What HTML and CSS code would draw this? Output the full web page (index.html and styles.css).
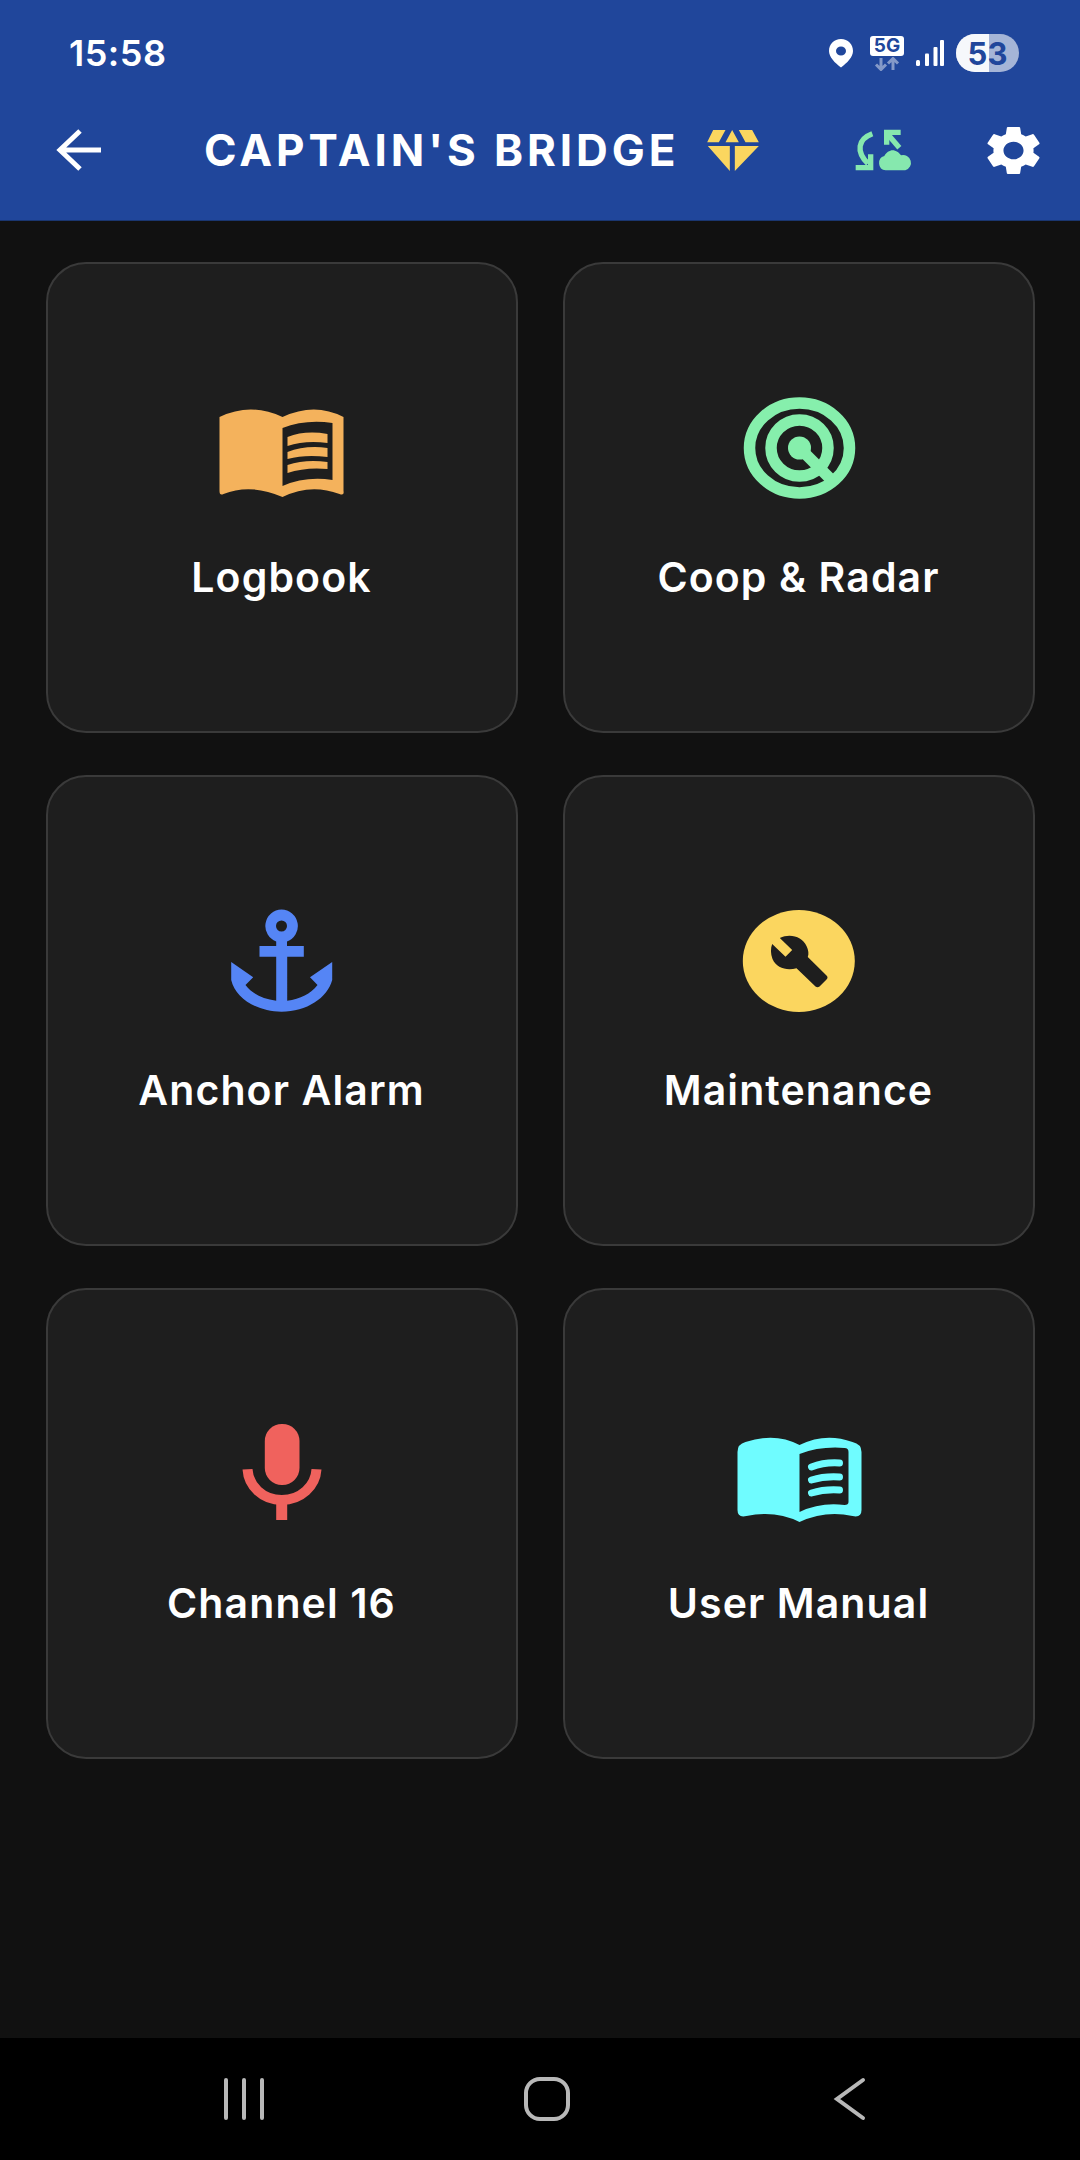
FILE: index.html
```html
<!DOCTYPE html>
<html lang="en">
<head>
    <meta charset="UTF-8">
    <meta name="viewport" content="width=device-width, initial-scale=1.0">
    <title>Captain's Bridge</title>
    <link rel="stylesheet" href="styles.css">
</head>
<body>
    <header class="top">
        <div class="status-bar">
            <span class="time">15:58</span>
            <div class="status-icons">
                <svg class="pin" viewBox="0 0 26 30"><path fill-rule="evenodd" fill="#fff" d="M13 1C6 1 1 6 1 13c0 6 6 12 12 16.500C19 25 25 19 25 13 25 6 20 1 13 1zm0 7.500a5 4.500 0 1 1 0 9 5 4.500 0 0 1 0-9z"/></svg>
                <div class="net">
                    <span class="net-label">5G</span>
                    <svg class="net-arrows" viewBox="0 0 34 14"><path d="M11 1v11M6 7.500l5 5 5-5" /><path class="up" d="M23 13V2M18 6.500l5-5 5 5" /></svg>
                </div>
                <svg class="signal" viewBox="0 0 28 26"><rect x="0" y="20" width="4" height="6" rx="1.500"/><rect x="9" y="13.500" width="4" height="12.500" rx="1"/><rect x="17.500" y="7" width="4" height="19" rx="1"/><rect x="24" y="0" width="4" height="26" rx="1"/></svg>
                <div class="battery"><span class="battery-level"></span><span class="battery-num">53</span></div>
            </div>
        </div>
        <div class="app-bar">
            <svg class="back" viewBox="0 0 50 44"><path d="M47 22H6M26 3L6 22l20 19"/></svg>
            <h1 class="title">CAPTAIN'S BRIDGE</h1>
            <svg class="gem" viewBox="50 52 155 126"><path fill="#fbd65f" d="M68 55h37L85 92H50zM125 55l20 37h-40zM145 55h40l20 37h-40zM52 103h66v75zM133 103h72l-72 75z"/></svg>
            <svg class="sync" viewBox="220 325 180 132"><g fill="none" stroke="#86e8ae" stroke-width="16"><path d="M275 342C232 358 225 395 262 432"/><path d="M225 444h45v-40"/><path d="M318 375v-37h42"/><path d="M320 342l36 42"/></g><path fill="#86e8ae" d="M315 452a22 22 0 0 1-4-43c6-12 20-20 32-16 8 2 14 8 18 14a23 23 0 0 1 13 45z"/></svg>
            <svg class="gear" viewBox="2.500 2 19 20" preserveAspectRatio="none"><path fill="#fff" d="M19.140 12.940c.04-.3.06-.61.06-.94 0-.32-.02-.64-.07-.94l2.030-1.580c.18-.14.23-.41.12-.61l-1.920-3.320c-.12-.22-.37-.29-.59-.22l-2.390.96c-.5-.38-1.030-.7-1.620-.94l-.36-2.540c-.04-.24-.24-.41-.48-.41h-3.840c-.24 0-.43.17-.47.41l-.36 2.540c-.59.24-1.130.57-1.620.94l-2.390-.96c-.22-.08-.47 0-.59.22L2.740 8.870c-.12.21-.08.47.12.61l2.030 1.580c-.05.3-.09.63-.09.94s.02.64.07.94l-2.030 1.580c-.18.14-.23.41-.12.61l1.920 3.320c.12.22.37.29.59.22l2.390-.96c.5.38 1.030.7 1.620.94l.36 2.540c.05.24.24.41.48.41h3.840c.24 0 .44-.17.47-.41l.36-2.540c.59-.24 1.130-.56 1.620-.94l2.390.96c.22.08.47 0 .59-.22l1.920-3.320c.12-.22.07-.47-.12-.61l-2.010-1.580zM12 15.600c-1.980 0-3.600-1.620-3.600-3.600s1.620-3.600 3.600-3.600 3.600 1.620 3.600 3.600-1.620 3.600-3.600 3.600z"/></svg>
        </div>
    </header>

    <main class="grid">
        <div class="card">
            <svg class="icon" viewBox="21.500 12 140 112">
                <path fill="#f4b25c" fill-rule="evenodd" d="M29 37Q60 22 92 37Q124 22 153 37V111Q154 116 149 114Q120 103 92 117Q60 103 33 114Q29 116 29 111zM92 48V106Q115 96 142 100V43Q115 39 92 48z"/>
                <path fill="#f4b25c" d="M97 57Q115 50 137 54V63Q115 60 97 66zM97 72Q115 65 137 68V77Q115 74 97 79zM97 85Q115 79 137 82V89Q115 87 97 93z"/>
            </svg>
            <span class="label">Logbook</span>
        </div>
        <div class="card">
            <svg class="icon" viewBox="8.500 12 140 112">
                <g fill="none" stroke="#86efac" stroke-width="11.500">
                    <ellipse cx="79" cy="68" rx="50" ry="45"/>
                    <ellipse cx="79" cy="68" rx="28.500" ry="28"/>
                    <path d="M79 68l30 30"/>
                </g>
                <circle cx="79" cy="68" r="11.500" fill="#86efac"/>
            </svg>
            <span class="label">Coop &amp; Radar</span>
        </div>
        <div class="card">
            <svg class="icon" viewBox="1.500 15 140 112">
                <path fill="#5585f5" fill-rule="evenodd" d="M71 19.500a16.500 16.500 0 0 1 5.500 32V56H93.300V66.700H76.700V110.700C90 109 100 104 107 95L99.500 87.300 121.700 72V90C117 108 96 121.700 71 121.700S25 108 20.700 90V72L42.700 87.300 35 95C42 104 52 109 65.700 110.700V66.700H49V56H65.700V51.500A16.500 16.500 0 0 1 71 19.500zM71 30.500a5.500 5.500 0 1 0 0 11 5.500 5.500 0 0 0 0-11z"/>
            </svg>
            <span class="label">Anchor Alarm</span>
        </div>
        <div class="card">
            <svg class="icon" viewBox="-1.500 5 140 112">
                <ellipse cx="68.300" cy="61" rx="56" ry="51" fill="#fbd65f"/>
                <path fill="#1e1e1e" d="M49.300 38C60 33 72 37 76 46 78 50 78.500 54 77.300 57L96 75.500Q98 77.500 96 79.500L89 86.500Q87 88 85 86.500L66 68.300C56 71 46 68 42 59 40 54 40 48 41.700 44L55 56.700 61.700 50z"/>
            </svg>
            <span class="label">Maintenance</span>
        </div>
        <div class="card">
            <svg class="icon" viewBox="-8.500 8 140 112">
                <rect x="44.300" y="14" width="34.700" height="61" rx="17" fill="#f0625d"/>
                <path fill="none" stroke="#f0625d" stroke-width="10" d="M27 59.300C28 76 42 90 61.300 90S95 76 96 59.300"/>
                <rect x="55.700" y="88" width="11" height="22" fill="#f0625d"/>
            </svg>
            <span class="label">Channel 16</span>
        </div>
        <div class="card">
            <svg class="icon" viewBox="8.500 8 140 112">
                <path fill="#6ffcff" fill-rule="evenodd" d="M17 42Q17 34 25 32Q55 22 79 35Q105 22 132 32Q141 34 141 42V100Q141 108 132 106Q105 100 79 112Q55 100 26 106Q17 108 17 100zM79 44V102Q100 92 124 95Q128 95 128 92V42Q128 38 124 38Q100 36 79 44z"/>
                <g fill="none" stroke="#6ffcff" stroke-width="7" stroke-linecap="round">
                    <path d="M91 57Q104 52 119 53"/>
                    <path d="M91 70Q104 66 119 67"/>
                    <path d="M91 83Q104 79 119 80"/>
                </g>
            </svg>
            <span class="label">User Manual</span>
        </div>
    </main>

    <nav class="nav-bar">
        <svg class="nav-icon" viewBox="0 0 60 44"><path d="M12 3v38M30 3v38M48 3v38"/></svg>
        <svg class="nav-icon" viewBox="0 0 60 44"><rect x="9" y="2" width="42" height="40" rx="14"/></svg>
        <svg class="nav-icon" viewBox="0 0 60 44"><path d="M43 3L17 22l26 19"/></svg>
    </nav>
</body>
</html>
```

FILE: styles.css
```css
* {
    box-sizing: border-box;
}
body {
    margin: 0;
    height: 2160px;
    display: flex;
    flex-direction: column;
    background-color: #111111;
    color: white;
    font-family: Inter, "Liberation Sans", sans-serif;
}
.top {
    height: 221px;
    background-color: #20469b;
    border-bottom: 1px solid #1a3670;
}
.status-bar {
    height: 106px;
    display: flex;
    align-items: center;
    justify-content: space-between;
    padding: 0 61px 0 69px;
}
.time {
    font-size: 36px;
    font-weight: 600;
    letter-spacing: 0.5px;
}
.status-icons {
    display: flex;
    align-items: center;
}
.pin {
    width: 26px;
    height: 30px;
    margin-right: 16px;
}
.net {
    width: 34px;
    margin-right: 12px;
    display: flex;
    flex-direction: column;
    align-items: center;
}
.net-label {
    width: 34px;
    height: 20px;
    background-color: white;
    border-radius: 3px;
    color: #20469b;
    font-size: 19px;
    line-height: 20px;
    font-weight: 700;
    text-align: center;
}
.net-arrows {
    width: 34px;
    height: 14px;
    margin-top: 1px;
    fill: none;
    stroke: rgba(255, 255, 255, 0.45);
    stroke-width: 3;
}
.signal {
    width: 28px;
    height: 26px;
    margin-right: 12px;
    fill: white;
}
.battery {
    position: relative;
    width: 63px;
    height: 38px;
    border-radius: 19px;
    overflow: hidden;
    background-color: rgba(255, 255, 255, 0.6);
    display: flex;
    align-items: center;
    justify-content: center;
}
.battery-level {
    position: absolute;
    left: 0;
    top: 0;
    bottom: 0;
    width: 33px;
    background-color: rgba(255, 255, 255, 0.9);
}
.battery-num {
    position: relative;
    color: #20469b;
    font-size: 31px;
    font-weight: 700;
}
.app-bar {
    height: 88px;
    display: flex;
    align-items: center;
}
.back {
    width: 50px;
    height: 44px;
    margin-left: 54px;
    margin-right: 100px;
    fill: none;
    stroke: white;
    stroke-width: 5;
}
.title {
    margin: 0 28px 0 0;
    font-size: 44px;
    font-weight: 700;
    letter-spacing: 3.9px;
    white-space: nowrap;
}
.gem {
    width: 52px;
    height: 42px;
    margin-right: 95px;
}
.sync {
    width: 60px;
    height: 44px;
    margin-right: 73px;
}
.gear {
    width: 53px;
    height: 49px;
}
.grid {
    flex: 1;
    display: grid;
    grid-template-columns: 472px 472px;
    grid-auto-rows: 471px;
    gap: 42px 45px;
    padding: 41px 45px 0 45.5px;
}
.card {
    background-color: #1e1e1e;
    border: 2px solid #3a3a3a;
    border-radius: 40px;
    display: flex;
    flex-direction: column;
    align-items: center;
    justify-content: center;
    gap: 50px;
    padding-bottom: 3px;
}
.icon {
    width: 140px;
    height: 112px;
}
.label {
    font-size: 41px;
    line-height: 47px;
    font-weight: 600;
    letter-spacing: 1.1px;
}
.nav-bar {
    height: 122px;
    background-color: black;
    display: flex;
    align-items: center;
    gap: 243px;
    padding-left: 214px;
}
.nav-icon {
    width: 60px;
    height: 44px;
    fill: none;
    stroke: #b8b8b8;
    stroke-width: 4;
    stroke-linecap: round;
}
```
